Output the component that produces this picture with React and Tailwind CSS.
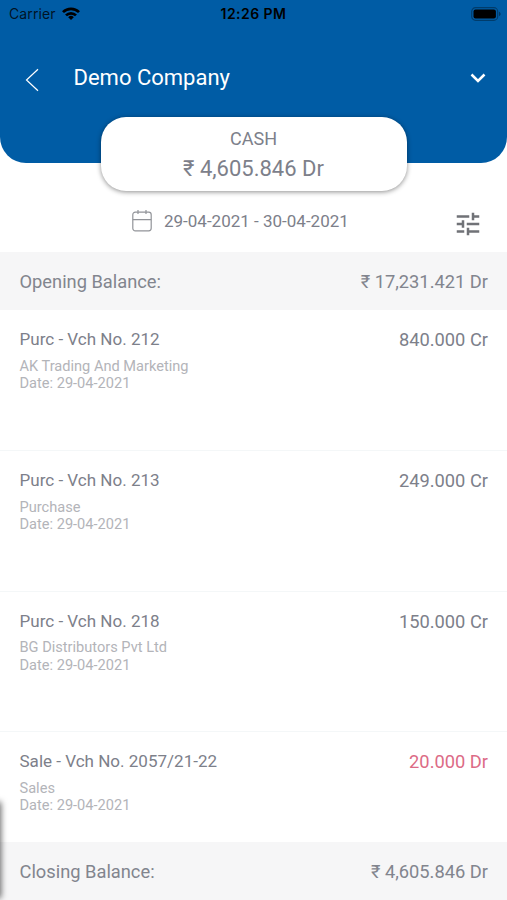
import React from "react";

const entries = [
  { title: "Purc - Vch No. 212", name: "AK Trading And Marketing", date: "29-04-2021", amount: "840.000 Cr" },
  { title: "Purc - Vch No. 213", name: "Purchase", date: "29-04-2021", amount: "249.000 Cr" },
  { title: "Purc - Vch No. 218", name: "BG Distributors Pvt Ltd", date: "29-04-2021", amount: "150.000 Cr" },
  { title: "Sale - Vch No. 2057/21-22", name: "Sales", date: "29-04-2021", amount: "20.000 Dr", debit: true },
];

function StatusBar() {
  return (
    <div className="relative flex h-[27px] items-center justify-between pl-[9px] pr-[6px] font-['Inter',sans-serif] text-black">
      <div className="flex items-center gap-[6px]">
        <span className="text-[14px] tracking-[0.1px] text-black/80">Carrier</span>
        <svg className="-mt-px" width="18" height="13" viewBox="0 0 18 13" fill="none" stroke="currentColor" strokeWidth="2.7">
          <path d="M1 5.1a11.3 11.3 0 0 1 16 0" />
          <path d="M4 8.4a7 7 0 0 1 10 0" />
          <path d="M9 13 6.2 10.2a4 4 0 0 1 5.6 0z" fill="currentColor" stroke="none" />
        </svg>
      </div>
      <span className="absolute inset-x-0 text-center text-[14px] font-semibold tracking-[0.45px]">12:26 PM</span>
      <svg width="30" height="14" viewBox="0 0 30 14">
        <rect x="0.7" y="0.7" width="26" height="12.6" rx="3.8" fill="none" stroke="#000" strokeOpacity="0.35" strokeWidth="1.2" />
        <rect x="2.5" y="2.5" width="22.4" height="9" rx="2" />
        <path d="M28 4.8v4.4c1-.4 1.6-1.2 1.6-2.2S29 5.2 28 4.8z" fillOpacity="0.4" />
      </svg>
    </div>
  );
}

function BalanceRow({ label, value }) {
  return (
    <div className="flex h-[58px] items-center justify-between bg-[#f6f6f7] pl-[19.5px] pr-[19px] pt-px text-[18.3px] text-[#82858e]">
      <span>{label}</span>
      <span>{value}</span>
    </div>
  );
}

function Entry({ entry }) {
  return (
    <div className="flex h-[140.6px] justify-between border-b border-[#f4f7f8] pl-[19.5px] pr-[19px] pt-[17px] last:h-[110.2px] last:border-b-0">
      <div>
        <p className="text-[17.05px] leading-[24px] text-[#7d808a]">{entry.title}</p>
        <p className="mt-[6.6px] text-[14.6px] leading-[17.5px] text-[#b3b4b9]">{entry.name}</p>
        <p className="text-[14.6px] leading-[17.5px] text-[#b3b4b9]">Date: {entry.date}</p>
      </div>
      <span className={entry.debit ? "text-[18.3px] leading-[26px] text-[#dc6b86]" : "text-[18.3px] leading-[26px] text-[#7d808a]"}>
        {entry.amount}
      </span>
    </div>
  );
}

export default function App() {
  return (
    <div className="relative h-[900px] w-full overflow-hidden bg-white font-['Roboto',sans-serif]">
      <header className="h-[163px] rounded-b-[26px] bg-[#005ca5]">
        <StatusBar />
        <div className="flex h-[100px] items-center pl-[25px] pr-[21px] text-white">
          <svg className="mt-[6px]" width="14" height="24" viewBox="0 0 14 24" fill="none" stroke="currentColor" strokeWidth="1.2">
            <path d="M13 1.2 1.5 12 13 22.8" />
          </svg>
          <h1 className="ml-[34.5px] flex-1 text-[22px]">Demo Company</h1>
          <svg className="mt-px" width="16" height="10" viewBox="0 0 16 10" fill="none" stroke="currentColor" strokeWidth="2.5">
            <path d="M1.5 1.5 8 8l6.5-6.5" />
          </svg>
        </div>
      </header>

      <div className="relative mx-auto -mt-[46px] flex h-[74px] w-[306px] flex-col items-center rounded-[25px] bg-white pt-[9px] text-[#7d808a] shadow-[0_1px_5px_rgba(0,0,0,0.45)]">
        <p className="text-[18px] leading-[26px]">CASH</p>
        <p className="mt-[2px] text-[22px] leading-[30px]">₹ 4,605.846 Dr</p>
      </div>

      <div className="relative flex h-[61.4px] items-center pl-[132px] text-[#7d808a]">
        <svg className="-mt-[2px]" width="20" height="22" viewBox="0 0 20 22" fill="none" stroke="#929499" strokeWidth="1.2">
          <rect x="0.8" y="2.2" width="18.4" height="18.6" rx="2.5" />
          <path d="M0.8 9.7h18.4M6 0v4M14 0v4" />
        </svg>
        <span className="ml-[12px] flex-1 text-[17px]">29-04-2021 - 30-04-2021</span>
        <svg className="mr-[24px] mt-[4px]" width="30" height="30" viewBox="0 0 24 24" fill="#707277">
          <path d="M3 17v2h6v-2H3zM3 5v2h10V5H3zm10 16v-2h8v-2h-8v-2h-2v6h2zM7 9v2H3v2h4v2h2V9H7zm14 4v-2H11v2h10zm-6-4h2V7h4V5h-4V3h-2v6z" />
        </svg>
      </div>

      <BalanceRow label="Opening Balance:" value="₹ 17,231.421 Dr" />
      <div>
        {entries.map((entry) => (
          <Entry key={entry.title} entry={entry} />
        ))}
      </div>
      <BalanceRow label="Closing Balance:" value="₹ 4,605.846 Dr" />

      {/* edge of the closed side drawer */}
      <div className="absolute -left-[10px] top-[803px] h-[94px] w-[10px] shadow-[0_0_6px_1px_rgba(0,0,0,0.6)]" />
    </div>
  );
}
